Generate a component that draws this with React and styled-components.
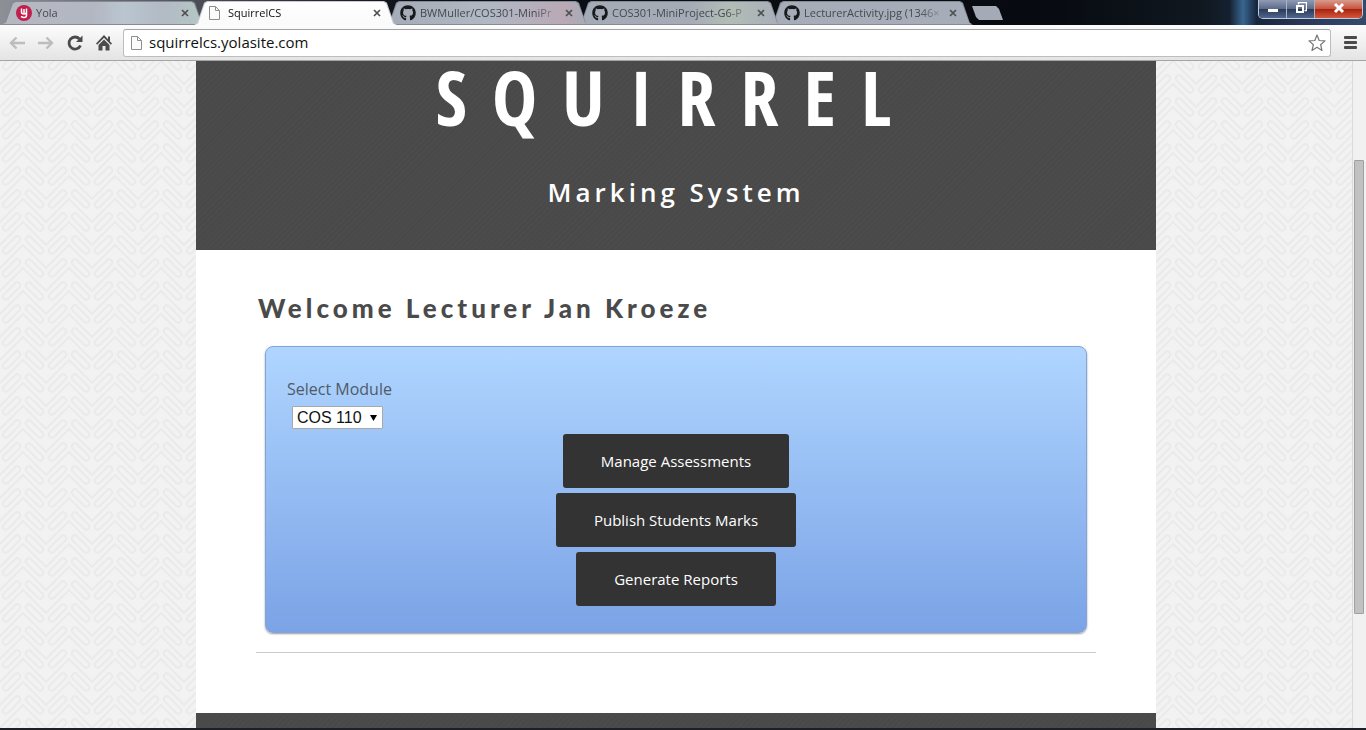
import React from "react";
import styled, { createGlobalStyle, css } from "styled-components";
import { FaGithub } from "react-icons/fa";

const weave = (color) =>
  `url("data:image/svg+xml,${encodeURIComponent(
    `<svg xmlns='http://www.w3.org/2000/svg' width='46' height='23' viewBox='0 0 46 23'><g fill='none' stroke='${color}' stroke-width='2'><path d='M-1 24L23 0L47 24M-1 1L1 -1M45 -1l2 2M22 24l1 -1l1 1'/><g transform='translate(11.5 0) rotate(-45)'><rect x='-11' y='-3' width='22' height='6' rx='3'/></g><g transform='translate(11.5 23) rotate(-45)'><rect x='-11' y='-3' width='22' height='6' rx='3'/></g><g transform='translate(34.5 0) rotate(45)'><rect x='-11' y='-3' width='22' height='6' rx='3'/></g><g transform='translate(34.5 23) rotate(45)'><rect x='-11' y='-3' width='22' height='6' rx='3'/></g></g></svg>`
  )}")`;

const GlobalStyle = createGlobalStyle`
  * { box-sizing: border-box; }
  body { margin: 0; background: #f1f1f1; font-family: "Open Sans", "Noto Sans", sans-serif; color: #4a4a4a; }
  button, input, select { font: inherit; margin: 0; }
  h1, h2, p { margin: 0; }
`;

const Window = styled.div`
  display: flex;
  flex-direction: column;
  min-height: 100vh;
  border-bottom: 2px solid #1c1e28;
`;

const TitleBar = styled.div`
  display: flex;
  align-items: flex-start;
  height: 25px;
  padding: 0 3px 0 2px;
  background: linear-gradient(90deg, #8d9096 0, #4c4f57 14%, #0b0f17 30%, #070a10 76%, #10171f 88%, #142030 90%, #3a6690 91%, #16263c 92%, #2b3a5c 96%, #344a6c 100%);
`;

const TabStrip = styled.div`
  display: flex;
  flex: 1;
  min-width: 0;
  height: 25px;
  padding-top: 1px;
`;

const slant = "polygon(0 100%, 3px 93%, 10px 7%, 13px 0, calc(100% - 13px) 0, calc(100% - 10px) 7%, calc(100% - 3px) 93%, 100% 100%)";

const Tab = styled.div`
  position: relative;
  z-index: ${(p) => p.$level};
  display: flex;
  align-items: center;
  flex: none;
  width: 203px;
  height: 24px;
  margin-right: -11px;
  padding: 0 14px;
  color: ${(p) => (p.$active ? "#111" : "#45484f")};
  &::before, &::after {
    content: "";
    position: absolute;
    inset: 0;
    z-index: -1;
    clip-path: ${slant};
    background: ${(p) => (p.$active ? "#c9cbd0" : "#858a93")};
  }
  &::after {
    inset: 1px 1px ${(p) => (p.$active ? 0 : 1)}px 1px;
    background: ${(p) => (p.$active ? "linear-gradient(#fff, #fafafa)" : p.$tint)};
  }
`;

const TabIcon = styled.span`
  display: flex;
  flex: 0 0 16px;
  height: 16px;
  margin-right: 4px;
  color: #17191d;
`;

const TabTitle = styled.button`
  flex: 1;
  min-width: 0;
  padding: 0;
  border: 0;
  background: none;
  color: inherit;
  font-size: 11px;
  line-height: 16px;
  text-align: left;
  white-space: nowrap;
  mask-image: linear-gradient(90deg, #000 calc(100% - 28px), transparent);
`;

const IconButton = styled.button`
  display: flex;
  align-items: center;
  justify-content: center;
  width: ${(p) => p.$size}px;
  height: ${(p) => p.$size}px;
  flex: none;
  padding: 0;
  border: 0;
  background: none;
  color: #4f4f4f;
`;

const NewTab = styled.button`
  flex: none;
  width: 31px;
  height: 14px;
  margin: 5px 0 0 10px;
  padding: 0;
  border: 0;
  background: #a4abb6;
  clip-path: polygon(0 0, 24px 0, 27px 3px, 31px 14px, 7px 14px, 4px 11px);
`;

const WindowControls = styled.div`
  display: flex;
  height: 19px;
  border: 1px solid #c3cad6;
  border-top: 0;
  border-radius: 0 0 5px 5px;
  overflow: hidden;
`;

const WindowButton = styled.button`
  display: flex;
  align-items: center;
  justify-content: center;
  width: ${(p) => (p.$close ? 47 : 28)}px;
  padding: 0 0 2px;
  border: 0;
  border-right: ${(p) => (p.$close ? 0 : 1)}px solid #aab3c4;
  background: ${(p) =>
    p.$close
      ? "linear-gradient(#d99a8c 0, #c6533d 50%, #a92310 52%, #d2573c 100%)"
      : "linear-gradient(#8f9bb4 0, #5b6a8a 50%, #2c3a58 52%, #50678f 100%)"};
`;

const Toolbar = styled.div`
  display: flex;
  align-items: center;
  height: 36px;
  padding: 0 6px 0 7px;
  gap: 9px;
  border-bottom: 1px solid #a5a5a5;
  background: linear-gradient(#fcfcfc, #e4e4e4);
`;

const AddressBar = styled.label`
  display: flex;
  align-items: center;
  flex: 1;
  min-width: 0;
  height: 28px;
  padding: 0 4px 0 6px;
  gap: 6px;
  border: 1px solid #bdbdbd;
  border-top-color: #a3a3a3;
  border-radius: 3px;
  background: #fff;
`;

const AddressInput = styled.input`
  flex: 1;
  min-width: 0;
  padding: 0 0 2px;
  border: 0;
  outline: 0;
  background: none;
  color: #111;
  font-size: 15px;
  line-height: 20px;
`;

const Viewport = styled.div`
  display: flex;
  flex: 1;
`;

const Page = styled.div`
  display: flex;
  flex: 1;
  justify-content: center;
  min-width: 0;
  background: #f2f2f2 ${weave("#eaeaea")};
`;

const Site = styled.div`
  display: flex;
  flex-direction: column;
  width: 100%;
  max-width: 960px;
  background: #fff;
`;

const dark = css`
  background: #4a4a4a repeating-linear-gradient(135deg, #4b4b4b 0, #4b4b4b 2px, #494949 2px, #494949 4px);
`;

const Banner = styled.header`
  ${dark}
  padding-bottom: 40px;
  color: #fff;
  text-align: center;
`;

const SiteTitle = styled.h1`
  font-family: "Open Sans Condensed", "Roboto Condensed", Lato, sans-serif;
  font-size: 76px;
  line-height: 72px;
  letter-spacing: 25px;
`;

const Tagline = styled.p`
  margin-top: 42px;
  font-size: 26px;
  font-weight: 600;
  line-height: 35px;
  letter-spacing: 4px;
`;

const Main = styled.main`
  padding: 40px 60px 60px;
`;

const Welcome = styled.h2`
  padding-left: 2px;
  font-family: Lato, "Open Sans", sans-serif;
  font-size: 26px;
  font-weight: 900;
  line-height: 36px;
  letter-spacing: 4px;
`;

const ModulePanel = styled.form`
  display: flex;
  flex-direction: column;
  align-items: flex-start;
  margin: 20px 9px 19px;
  padding: 30px 21px 26px;
  border: 1px solid #86a3d9;
  border-radius: 8px;
  background: linear-gradient(#afd5ff, #7ba3e6);
  box-shadow: 0 1px 2px #9a9a9a;
`;

const FieldLabel = styled.label`
  color: #505a68;
  font-size: 16px;
  line-height: 24px;
`;

const SelectBox = styled.span`
  display: grid;
  align-items: center;
  margin: 5px;
`;

const ModuleSelect = styled.select`
  grid-area: 1 / 1;
  appearance: none;
  height: 23px;
  padding: 0 20px 0 4px;
  border: 1px solid #a9a9a9;
  border-radius: 1px;
  background: #fff;
  color: #111;
  font-family: "Liberation Sans", sans-serif;
  font-size: 16px;
`;

const SelectArrow = styled.svg`
  grid-area: 1 / 1;
  justify-self: end;
  margin-right: 6px;
  pointer-events: none;
`;

const Actions = styled.div`
  display: flex;
  flex-direction: column;
  align-items: center;
  align-self: stretch;
  gap: 5px;
`;

const ActionButton = styled.button`
  padding: 16px 38px;
  border: 0;
  border-radius: 3px;
  background: #333;
  color: #fff;
  font-size: 15px;
  line-height: 22px;
`;

const Divider = styled.hr`
  margin: 0;
  border: 0;
  border-top: 1px solid #ccc;
`;

const Footer = styled.footer`
  ${dark}
  flex: 1;
  min-height: 15px;
`;

const ScrollTrack = styled.div`
  flex: 0 0 14px;
  padding: 99px 2px 0 1px;
  border-left: 1px solid #dadada;
  background: #f1f1f1;
`;

const ScrollThumb = styled.div`
  height: 454px;
  border: 1px solid #a0a0a0;
  border-radius: 1px;
  background: #c1c1c1;
`;

const PageIcon = () => (
  <svg width="13" height="16" viewBox="0 0 13 16" fill="#fbfbfb" stroke="#8f8f8f" aria-hidden="true">
    <path d="M1.500 1.500h6l4 4v9h-10z" />
    <path d="M7.500 1.500v4h4" fill="none" />
  </svg>
);

const YolaIcon = () => (
  <svg width="16" height="16" viewBox="0 0 16 16" aria-hidden="true">
    <circle cx="8" cy="8" r="8" fill="#c11f4e" />
    <path d="M5.500 3.500v3.500q0 2 2.500 2t2.500-2v-3.500M10.500 6v4.500q0 2-2.500 2t-2.500-1.500M8 4v4" fill="none" stroke="#fff" strokeWidth="1.500" />
  </svg>
);

const CloseIcon = () => (
  <svg width="8" height="8" viewBox="0 0 8 8" stroke="currentColor" strokeWidth="1.700" aria-hidden="true">
    <path d="M1 1l6 6M7 1l-6 6" />
  </svg>
);

const Arrow = ({ flip }) => (
  <svg width="16" height="14" viewBox="0 0 16 14" fill="none" stroke="#bdbdbd" strokeWidth="2.400" aria-hidden="true">
    <path d={flip ? "M0 7h14M8.500 1.500L14 7l-5.500 5.500" : "M16 7H2M7.500 1.500L2 7l5.500 5.500"} />
  </svg>
);

const ReloadIcon = () => (
  <svg width="18" height="18" viewBox="0 0 18 18" aria-hidden="true">
    <path d="M14.500 11.500A6 6 0 1 1 13.500 5" fill="none" stroke="#4b4b4b" strokeWidth="2.800" />
    <path d="M16.500 1.500v6.500H10z" fill="#4b4b4b" />
  </svg>
);

const HomeIcon = () => (
  <svg width="16" height="16" viewBox="0 0 16 16" fill="#4b4b4b" aria-hidden="true">
    <path d="M8 0L0 8.500l1.200 1.200L8 2.800l6.800 6.900L16 8.500l-2-2.100V1.500h-2v2.700z" />
    <path d="M8 4.500L2.500 10v5.500h4V11h3v4.500h4V10z" />
  </svg>
);

const StarIcon = () => (
  <svg width="18" height="18" viewBox="0 0 18 18" fill="#fff" stroke="#777" strokeWidth="1.200" strokeLinejoin="round" aria-hidden="true">
    <path d="M9 1l2.200 5.500 5.800.4-4.400 3.800 1.400 5.800L9 13.300l-5 3.200 1.400-5.800L1 6.900l5.800-.4z" />
  </svg>
);

const MenuIcon = () => (
  <svg width="14" height="14" viewBox="0 0 14 14" fill="#4b4b4b" aria-hidden="true">
    <rect x="1" y="0" width="13" height="3" rx="1" />
    <rect x="1" y="5" width="13" height="3" rx="1" />
    <rect x="1" y="10" width="13" height="3" rx="1" />
  </svg>
);

const tabs = [
  { title: "Yola", icon: <YolaIcon />, level: 3, tint: "linear-gradient(90deg, #b5b8c0, #b3b7c2 45%, #bac5d0 60%, #b2bac4 80%, #b4c8c4)" },
  { title: "SquirrelCS", icon: <PageIcon />, level: 4, active: true },
  { title: "BWMuller/COS301-MiniPr", icon: <FaGithub size={16} />, level: 3, tint: "linear-gradient(90deg, #a5acb7, #b0b8c4 50%, #b9a9b5 88%, #a5abb6)" },
  { title: "COS301-MiniProject-G6-P", icon: <FaGithub size={16} />, level: 2, tint: "linear-gradient(90deg, #a5abb6, #a5abb6 55%, #b2bdb5 75%, #a8aeb9)" },
  { title: "LecturerActivity.jpg (1346×", icon: <FaGithub size={16} />, level: 1, tint: "#a6adb9" },
];

const actions = ["Manage Assessments", "Publish Students Marks", "Generate Reports"];

export default function App() {
  return (
    <>
      <GlobalStyle />
      <Window>
        <TitleBar>
          <TabStrip>
            {tabs.map((t) => (
              <Tab key={t.title} $active={t.active} $level={t.level} $tint={t.tint}>
                <TabIcon>{t.icon}</TabIcon>
                <TabTitle type="button">{t.title}</TabTitle>
                <IconButton type="button" $size={12} aria-label="Close tab"><CloseIcon /></IconButton>
              </Tab>
            ))}
            <NewTab type="button" aria-label="New tab" />
          </TabStrip>
          <WindowControls>
            <WindowButton type="button" aria-label="Minimize">
              <svg width="12" height="12" viewBox="0 0 12 12"><rect x="1" y="7" width="10" height="3" fill="#fff" /></svg>
            </WindowButton>
            <WindowButton type="button" aria-label="Restore">
              <svg width="12" height="12" viewBox="0 0 12 12" fill="none" stroke="#fff">
                <path d="M3.500 2.500v-2h8v8h-2" strokeWidth="1.300" />
                <rect x="2" y="4" width="6" height="6" strokeWidth="2" />
              </svg>
            </WindowButton>
            <WindowButton type="button" $close aria-label="Close">
              <svg width="12" height="12" viewBox="0 0 12 12" stroke="#fff" strokeWidth="3"><path d="M2 2l8 8M10 2l-8 8" /></svg>
            </WindowButton>
          </WindowControls>
        </TitleBar>
        <Toolbar>
          <IconButton type="button" $size={20} aria-label="Back"><Arrow /></IconButton>
          <IconButton type="button" $size={20} aria-label="Forward"><Arrow flip /></IconButton>
          <IconButton type="button" $size={20} aria-label="Reload"><ReloadIcon /></IconButton>
          <IconButton type="button" $size={20} aria-label="Home"><HomeIcon /></IconButton>
          <AddressBar>
            <PageIcon />
            <AddressInput aria-label="Address" defaultValue="squirrelcs.yolasite.com" />
            <IconButton type="button" $size={18} aria-label="Bookmark"><StarIcon /></IconButton>
          </AddressBar>
          <IconButton type="button" $size={20} aria-label="Menu"><MenuIcon /></IconButton>
        </Toolbar>
        <Viewport>
          <Page>
            <Site>
              <Banner>
                <SiteTitle>SQUIRREL</SiteTitle>
                <Tagline>Marking System</Tagline>
              </Banner>
              <Main>
                <Welcome>Welcome Lecturer Jan Kroeze</Welcome>
                <ModulePanel>
                  <FieldLabel htmlFor="module">Select Module</FieldLabel>
                  <SelectBox>
                    <ModuleSelect id="module" defaultValue="COS 110">
                      <option>COS 110</option>
                    </ModuleSelect>
                    <SelectArrow width="7" height="6" viewBox="0 0 7 6" aria-hidden="true">
                      <path d="M0 0h7L3.500 6z" fill="#000" />
                    </SelectArrow>
                  </SelectBox>
                  <Actions>
                    {actions.map((a) => (
                      <ActionButton type="button" key={a}>{a}</ActionButton>
                    ))}
                  </Actions>
                </ModulePanel>
                <Divider />
              </Main>
              <Footer />
            </Site>
          </Page>
          <ScrollTrack>
            <ScrollThumb />
          </ScrollTrack>
        </Viewport>
      </Window>
    </>
  );
}
